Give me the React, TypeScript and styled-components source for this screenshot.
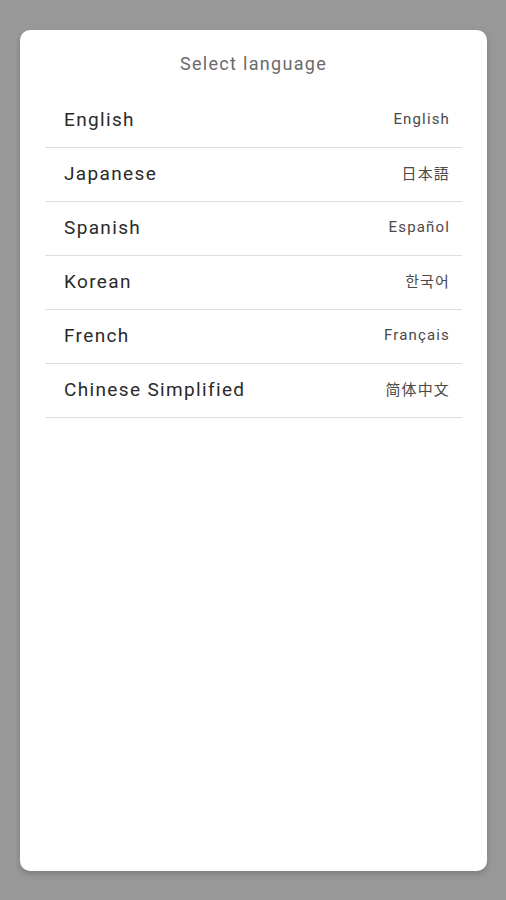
import styled, { createGlobalStyle } from 'styled-components';

const GlobalStyle = createGlobalStyle`
  html, body {
    margin: 0;
    padding: 0;
    background: #989898;
  }
  body {
    font-family: Roboto, "Noto Sans", "Noto Sans CJK JP", sans-serif;
  }
`;

const Page = styled.div`
  height: 900px;
  padding: 30px 19px 29px 20px;
  box-sizing: border-box;
  display: flex;
`;

const Card = styled.div`
  flex: 1;
  background: #fff;
  border-radius: 10px;
  box-shadow: 0 3px 6px rgba(0, 0, 0, 0.18);
  padding: 0 25px;
  display: flex;
  flex-direction: column;
`;

const Title = styled.div`
  height: 64px;
  display: flex;
  align-items: center;
  justify-content: center;
  padding-top: 2px;
  box-sizing: border-box;
  font-size: 18px;
  letter-spacing: 1.3px;
  color: #6a6a6a;
`;

const List = styled.ul`
  list-style: none;
  margin: 0;
  padding: 0;
`;

const Row = styled.li`
  height: 54px;
  display: flex;
  align-items: center;
  justify-content: space-between;
  padding: 0 12px 0 19px;
  border-bottom: 1.5px solid #dedede;
  box-sizing: border-box;
`;

const Name = styled.span`
  font-size: 19px;
  letter-spacing: 1.35px;
  color: #2a2a2a;
  margin-top: -3px;
`;

const Native = styled.span`
  font-size: 15px;
  letter-spacing: 1.15px;
  color: #4a4a4a;
  margin-top: -4px;
`;

const languages = [
  { name: 'English', native: 'English' },
  { name: 'Japanese', native: '日本語' },
  { name: 'Spanish', native: 'Español' },
  { name: 'Korean', native: '한국어' },
  { name: 'French', native: 'Français' },
  { name: 'Chinese Simplified', native: '简体中文' },
];

export default function App() {
  return (
    <>
      <GlobalStyle />
      <Page>
        <Card>
          <Title>Select language</Title>
          <List>
            {languages.map(l => (
              <Row key={l.name}>
                <Name>{l.name}</Name>
                <Native>{l.native}</Native>
              </Row>
            ))}
          </List>
        </Card>
      </Page>
    </>
  );
}
